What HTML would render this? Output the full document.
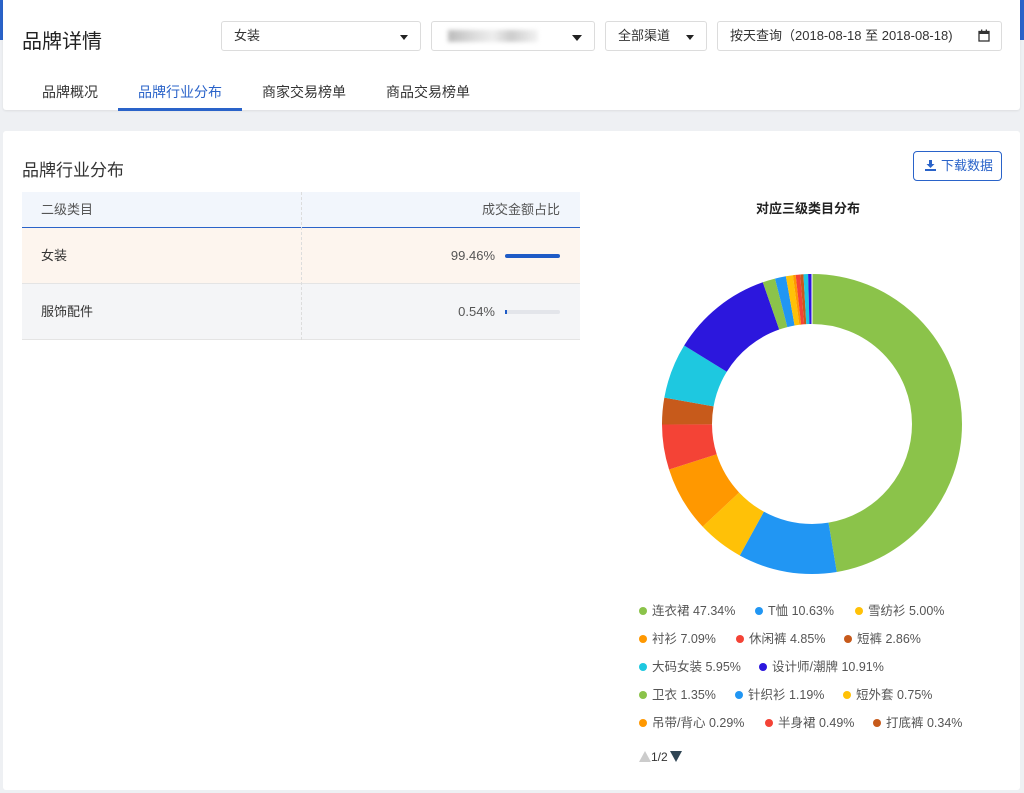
<!DOCTYPE html>
<html><head><meta charset="utf-8"><style>
*{margin:0;padding:0;box-sizing:border-box}
body{width:1024px;height:793px;background:#eef0f3;font-family:"Liberation Sans","Noto Sans CJK SC",sans-serif;color:#333;position:relative;overflow:hidden}
.band{position:absolute;left:0;top:0;width:1024px;height:40px;background:#2a63c9}
.card1{position:absolute;left:3px;top:0;width:1017px;height:110px;background:#fff;border-radius:0 0 3px 3px;box-shadow:0 1px 2px rgba(0,0,0,.08)}
.title{position:absolute;left:22px;top:25px;font-size:20px;color:#222}
.sel{position:absolute;top:21px;height:30px;border:1px solid #dcdcdc;border-radius:3px;background:#fff;font-size:13px;line-height:28px;padding-left:12px;color:#333}
.tri{position:absolute;top:13px;width:0;height:0;border-left:4px solid transparent;border-right:4px solid transparent;border-top:5px solid #222}
.tabs span{position:absolute;top:82px;font-size:14px;color:#333}
.card2{position:absolute;left:3px;top:131px;width:1017px;height:659px;background:#fff;border-radius:3px}
.t th,.t td{font-weight:normal}
</style></head><body>
<div class="band"></div>
<div class="card1"></div>
<div class="title">品牌详情</div>
<div class="sel" style="left:221px;width:200px">女装<div class="tri" style="left:178px"></div></div>
<div class="sel" style="left:431px;width:164px"><div style="position:absolute;left:16px;top:8px;width:90px;height:12px;background:linear-gradient(90deg,#bbb 0,#ddd 30%,#eee 50%,#ccc 70%,#f3f3f3 100%);filter:blur(2px)"></div><div class="tri" style="left:140px;border-left-width:5px;border-right-width:5px;border-top-width:6px"></div></div>
<div class="sel" style="left:605px;width:102px">全部渠道<div class="tri" style="left:80px"></div></div>
<div class="sel" style="left:717px;width:285px">按天查询（2018-08-18 至 2018-08-18)
<svg style="position:absolute;left:260px;top:7px" width="12" height="13" viewBox="0 0 12 13"><rect x="1" y="2.5" width="10" height="9.5" fill="none" stroke="#333" stroke-width="1.3"/><rect x="1" y="2.5" width="10" height="2.5" fill="#333"/><rect x="3" y="0.5" width="1.3" height="3" fill="#333"/><rect x="7.7" y="0.5" width="1.3" height="3" fill="#333"/></svg></div>
<div class="tabs"><span style="left:42px">品牌概况</span><span style="left:138px;color:#2a63c9">品牌行业分布</span><span style="left:262px">商家交易榜单</span><span style="left:386px">商品交易榜单</span></div>
<div style="position:absolute;left:118px;top:108px;width:124px;height:3px;background:#2a63c9"></div>

<div class="card2"></div>
<div style="position:absolute;left:22px;top:156px;font-size:17px;color:#333">品牌行业分布</div>
<div style="position:absolute;left:913px;top:151px;width:89px;height:30px;border:1px solid #2a63c9;border-radius:4px;color:#2a63c9;font-size:13px;line-height:28px;padding-left:27px">下载数据
<svg style="position:absolute;left:11px;top:8px" width="11" height="11" viewBox="0 0 11 11"><path d="M4 0h3v4h2.5L5.5 8 1.5 4H4z" fill="#2a63c9"/><rect x="0" y="9" width="11" height="2" fill="#2a63c9"/></svg></div>

<div style="position:absolute;left:22px;top:192px;width:558px;height:148px">
 <div style="position:absolute;left:0;top:0;width:558px;height:36px;background:#f2f6fc;border-bottom:1px solid #2a63c9;font-size:13px;color:#555;line-height:35px"><span style="position:absolute;left:19px">二级类目</span><span style="position:absolute;right:20px">成交金额占比</span></div>
 <div style="position:absolute;left:0;top:36px;width:558px;height:56px;background:#fdf5ee;border-bottom:1px solid #e4e4e4;font-size:13px;line-height:56px"><span style="position:absolute;left:19px">女装</span><span style="position:absolute;right:85px;color:#555">99.46%</span><div style="position:absolute;left:483px;top:26px;width:55px;height:4px;background:#1e5bc6;border-radius:2px"></div></div>
 <div style="position:absolute;left:0;top:92px;width:558px;height:56px;background:#f4f5f7;border-bottom:1px solid #e4e4e4;font-size:13px;line-height:56px"><span style="position:absolute;left:19px">服饰配件</span><span style="position:absolute;right:85px;color:#555">0.54%</span><div style="position:absolute;left:483px;top:26px;width:55px;height:4px;background:#e3e5ea;border-radius:2px"></div><div style="position:absolute;left:483px;top:26px;width:2px;height:4px;background:#1e5bc6"></div></div>
 <div style="position:absolute;left:279px;top:0;width:0;height:148px;border-left:1px dashed #ddd"></div>
</div>

<div style="position:absolute;left:756px;top:198px;font-size:13px;font-weight:bold;color:#222">对应三级类目分布</div>
<svg style="position:absolute;left:662px;top:274px" width="300" height="300" viewBox="0 0 300 300">
<g transform="rotate(-90 150 150)" fill="none" stroke-width="50">
<circle cx="150" cy="150" r="125" stroke="#8bc34a" stroke-dasharray="371.8 1000" stroke-dashoffset="0"/>
<circle cx="150" cy="150" r="125" stroke="#2196f3" stroke-dasharray="83.5 1000" stroke-dashoffset="-371.8"/>
<circle cx="150" cy="150" r="125" stroke="#ffc107" stroke-dasharray="39.3 1000" stroke-dashoffset="-455.3"/>
<circle cx="150" cy="150" r="125" stroke="#ff9800" stroke-dasharray="55.7 1000" stroke-dashoffset="-494.6"/>
<circle cx="150" cy="150" r="125" stroke="#f44336" stroke-dasharray="38.1 1000" stroke-dashoffset="-550.3"/>
<circle cx="150" cy="150" r="125" stroke="#c75a1b" stroke-dasharray="22.5 1000" stroke-dashoffset="-588.4"/>
<circle cx="150" cy="150" r="125" stroke="#1ec8e0" stroke-dasharray="46.7 1000" stroke-dashoffset="-610.9"/>
<circle cx="150" cy="150" r="125" stroke="#2c17dd" stroke-dasharray="85.7 1000" stroke-dashoffset="-657.6"/>
<circle cx="150" cy="150" r="125" stroke="#8bc34a" stroke-dasharray="10.6 1000" stroke-dashoffset="-743.3"/>
<circle cx="150" cy="150" r="125" stroke="#2196f3" stroke-dasharray="9.3 1000" stroke-dashoffset="-753.9"/>
<circle cx="150" cy="150" r="125" stroke="#ffc107" stroke-dasharray="5.9 1000" stroke-dashoffset="-763.2"/>
<circle cx="150" cy="150" r="125" stroke="#ff9800" stroke-dasharray="2.3 1000" stroke-dashoffset="-769.1"/>
<circle cx="150" cy="150" r="125" stroke="#f44336" stroke-dasharray="3.8 1000" stroke-dashoffset="-771.4"/>
<circle cx="150" cy="150" r="125" stroke="#c75a1b" stroke-dasharray="2.7 1000" stroke-dashoffset="-775.2"/>
<circle cx="150" cy="150" r="125" stroke="#1ec8e0" stroke-dasharray="3.9 1000" stroke-dashoffset="-777.9"/>
<circle cx="150" cy="150" r="125" stroke="#2c17dd" stroke-dasharray="3.6 1000" stroke-dashoffset="-781.8"/>
</g>
<g stroke="#fff" stroke-width="1">
<line x1="150" y1="150" x2="150" y2="0"/>
</g>
</svg>

<div style="position:absolute;left:639px;top:604px;font-size:12.5px;color:#555;line-height:28px">
<style>.l i{display:inline-block;width:8px;height:8px;border-radius:50%;margin-right:5px;vertical-align:0}.l span{position:absolute;white-space:nowrap}</style>
<div class="l" style="position:relative;height:140px;width:380px">
<span style="left:0;top:-7px"><i style="background:#8bc34a"></i>连衣裙 47.34%</span>
<span style="left:116px;top:-7px"><i style="background:#2196f3"></i>T恤 10.63%</span>
<span style="left:216px;top:-7px"><i style="background:#ffc107"></i>雪纺衫 5.00%</span>
<span style="left:0;top:21px"><i style="background:#ff9800"></i>衬衫 7.09%</span>
<span style="left:97px;top:21px"><i style="background:#f44336"></i>休闲裤 4.85%</span>
<span style="left:205px;top:21px"><i style="background:#c75a1b"></i>短裤 2.86%</span>
<span style="left:0;top:49px"><i style="background:#1ec8e0"></i>大码女装 5.95%</span>
<span style="left:120px;top:49px"><i style="background:#2c17dd"></i>设计师/潮牌 10.91%</span>
<span style="left:0;top:77px"><i style="background:#8bc34a"></i>卫衣 1.35%</span>
<span style="left:96px;top:77px"><i style="background:#2196f3"></i>针织衫 1.19%</span>
<span style="left:204px;top:77px"><i style="background:#ffc107"></i>短外套 0.75%</span>
<span style="left:0;top:105px"><i style="background:#ff9800"></i>吊带/背心 0.29%</span>
<span style="left:126px;top:105px"><i style="background:#f44336"></i>半身裙 0.49%</span>
<span style="left:234px;top:105px"><i style="background:#c75a1b"></i>打底裤 0.34%</span>
</div></div>
<div style="position:absolute;left:639px;top:750px;font-size:12px;color:#333;line-height:14px">
<span style="display:inline-block;width:0;height:0;border-left:6px solid transparent;border-right:6px solid transparent;border-bottom:11px solid #ccc;vertical-align:-1px"></span>1/2<span style="display:inline-block;width:0;height:0;border-left:6px solid transparent;border-right:6px solid transparent;border-top:11px solid #2f4554;vertical-align:-1px;margin-left:2px"></span>
</div>
</body></html>
